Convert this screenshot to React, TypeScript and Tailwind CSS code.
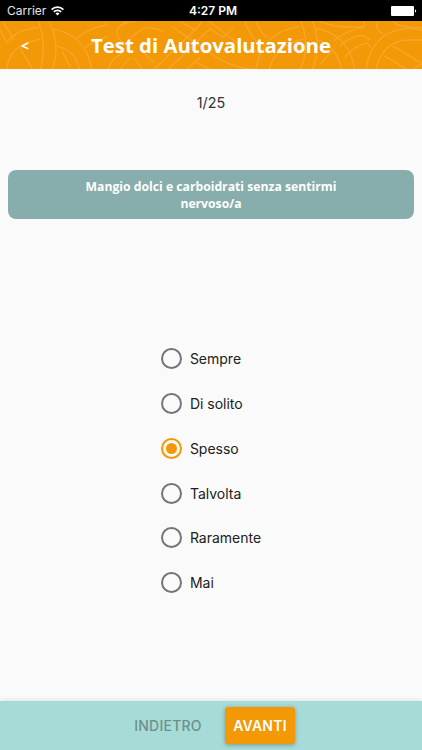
const options = ["Sempre", "Di solito", "Spesso", "Talvolta", "Raramente", "Mai"];

function StatusBar() {
  return (
    <div className="grid h-[21px] shrink-0 grid-cols-3 items-center bg-black pr-[5px] pl-[7px] text-[12px] leading-none text-white">
      <div className="flex items-center gap-[5px]">
        <span className="text-gray-200">Carrier</span>
        <svg width="13" height="10" viewBox="0 0 13 10" fill="none" stroke="currentColor" strokeWidth="1.7">
          <path d="M.6 3.6a8.4 8.4 0 0 1 11.8 0" />
          <path d="M2.8 5.9a5.2 5.2 0 0 1 7.4 0" />
          <path d="M6.5 9.4 4.5 7.4a2.8 2.8 0 0 1 4 0Z" fill="currentColor" stroke="none" />
        </svg>
      </div>
      <span className="pl-[2px] text-center font-semibold">4:27 PM</span>
      <svg className="justify-self-end" width="26" height="10" viewBox="0 0 26 10" fill="white">
        <rect x="0" y="0" width="23" height="10" rx="1" />
        <path d="M24 3.5c1.6.3 1.6 2.7 0 3Z" />
      </svg>
    </div>
  );
}

function HeaderPattern() {
  return (
    <svg
      className="absolute inset-0"
      width="422"
      height="48"
      viewBox="0 3 1266 144"
      fill="none"
      stroke="#f6a526"
      strokeWidth="4.5"
    >
      {/* left wheel */}
      <path d="M0 28L20 68M8 3L42 60M20 68Q55 24 116 24" />
      <path d="M20 148Q28 72 122 58M160 28Q258 45 275 148M170 78Q228 92 238 148" />
      <path d="M115 3Q142 75 122 148M148 3Q182 75 158 148" />
      <path d="M60 84L98 148M186 92L212 142" />
      {/* woven bands behind the title */}
      <path d="M232 52Q270 24 320 14L316 3M255 82Q285 62 322 50" />
      <path d="M325 148Q338 108 375 96M362 148Q372 128 392 114" />
      <path d="M412 3Q340 12 352 44Q362 72 394 82M382 3Q362 12 358 22" />
      <path d="M388 68Q400 34 440 24Q468 22 492 36M400 112L426 146M430 98L462 128" />
      <path d="M462 148L585 30L540 3M505 148L630 26L668 52L700 24M585 30L608 3" />
      <path d="M516 20L650 112Q710 148 770 148M600 112L560 148" />
      <path d="M625 3L718 74Q742 90 780 98M590 128L630 148" />
      {/* middle wheel */}
      <path d="M735 3Q744 38 778 74M768 3Q776 32 802 52" />
      <path d="M768 148Q786 34 898 20M808 148Q826 76 910 58" />
      <path d="M902 3Q934 75 900 148M938 3Q966 70 938 148" />
      <path d="M944 24Q1048 42 1064 148M952 60Q1012 80 1024 148M962 132L1000 88" />
      {/* right wheel */}
      <path d="M954 3Q1010 26 1092 20V3M1002 62Q1036 32 1096 20" />
      <path d="M1018 80Q1048 50 1088 46L1112 60M1034 112Q1062 78 1102 68L1112 84" />
      <path d="M1134 3Q1122 28 1150 42M1178 3Q1192 22 1266 24" />
      <path d="M1098 148Q1116 32 1220 26Q1245 24 1266 32M1128 148Q1148 62 1226 60H1266" />
      <path d="M1154 108L1220 148M1178 78L1266 130M1238 148L1266 132" />
    </svg>
  );
}

function Header() {
  return (
    <header className="relative flex h-[48px] shrink-0 items-center justify-center bg-[#f39806] font-['Open_Sans',sans-serif] font-bold text-white">
      <HeaderPattern />
      <button className="absolute top-[14px] left-[21px] text-[14px] leading-[22px]">&lt;</button>
      <h1 className="relative text-[20.35px] leading-[28px]">Test di Autovalutazione</h1>
    </header>
  );
}

function RadioOption({ label, checked }: { label: string; checked: boolean }) {
  return (
    <label className="flex h-[44.8px] items-center gap-[8px]">
      <input type="radio" name="answer" className="peer sr-only" defaultChecked={checked} />
      <span className="flex size-[21px] items-center justify-center rounded-full border-2 border-[#757575] peer-checked:border-[#f39806]">
        {checked && <span className="size-[11px] rounded-full bg-[#f39806]" />}
      </span>
      <span>{label}</span>
    </label>
  );
}

export default function App() {
  return (
    <div className="flex h-[750px] w-[422px] flex-col overflow-hidden bg-[#fafafa] font-['Inter',sans-serif] text-[#212121]">
      <StatusBar />
      <Header />
      <main className="flex flex-1 flex-col items-center px-[8.4px] pt-[24px]">
        <p className="text-[14.3px] leading-[20px] text-[#333]">1/25</p>
        <div className="mt-[57px] flex h-[49px] w-full items-center justify-center rounded-[8px] bg-[#87aeac] px-[70px] text-center font-['Open_Sans',sans-serif] text-[12.2px] leading-[17px] font-bold text-white">
          Mangio dolci e carboidrati senza sentirmi nervoso/a
        </div>
        <div className="mt-[117.3px] flex flex-col text-[14px]">
          {options.map((label) => (
            <RadioOption key={label} label={label} checked={label === "Spesso"} />
          ))}
        </div>
      </main>
      <footer className="flex h-[49px] shrink-0 items-center justify-center gap-[14px] bg-[#a7dbd7] pr-[2px] text-[14px] font-medium shadow-[0_-1px_5px_rgba(0,0,0,0.1)]">
        <button className="w-[86px] tracking-[0.25px] text-[#6b918e]">INDIETRO</button>
        <button className="h-[37px] w-[70px] rounded-[3px] bg-[#f39806] font-semibold tracking-[0.25px] text-white shadow-[0_1px_4px_rgba(0,0,0,0.3)]">
          AVANTI
        </button>
      </footer>
    </div>
  );
}
